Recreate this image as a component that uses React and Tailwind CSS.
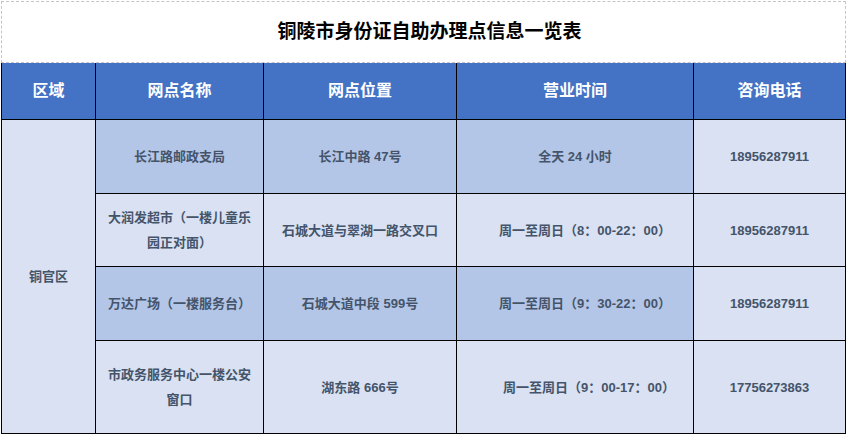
import React from 'react';

const font = { fontFamily: '"Liberation Sans", "Noto Sans CJK SC", sans-serif' };

const headers = ['区域', '网点名称', '网点位置', '营业时间', '咨询电话'];

const rows = [
  {
    name: ['长江路邮政支局'],
    place: '长江中路 47号',
    time: '全天 24 小时',
    phone: '18956287911',
    shade: true,
    shift: '',
  },
  {
    name: ['大润发超市（一楼儿童乐', '园正对面）'],
    place: '石城大道与翠湖一路交叉口',
    time: '周一至周日（8：00-22：00）',
    phone: '18956287911',
    shade: false,
    shift: 'pl-[20px]',
  },
  {
    name: ['万达广场（一楼服务台）'],
    place: '石城大道中段 599号',
    time: '周一至周日（9：30-22：00）',
    phone: '18956287911',
    shade: true,
    shift: 'pl-[20px]',
  },
  {
    name: ['市政务服务中心一楼公安', '窗口'],
    place: '湖东路 666号',
    time: '周一至周日（9：00-17：00）',
    phone: '17756273863',
    shade: false,
    shift: 'pl-[28px]',
  },
];

const Cell = ({ children, className = '' }) => (
  <div
    className={`flex items-center justify-center text-center text-[13px] font-bold leading-[25px] text-[#44546a] ${className}`}
  >
    {children}
  </div>
);

const App = () => {
  return (
    <div className="w-[848px] h-[435px] bg-white pt-px pl-px" style={font}>
      <div className="w-[845px] h-[62px] border border-dashed border-[#c4c4c4] flex items-center justify-center pl-[12px]">
        <h1 className="text-[19px] font-bold text-black">铜陵市身份证自助办理点信息一览表</h1>
      </div>
      <div className="w-[845px] grid grid-cols-[93px_167px_192px_236px_151px] grid-rows-[56px_73px_72px_73px_92px] gap-px bg-black border-x border-b border-black">
        {headers.map((h) => (
          <div key={h} className="bg-[#4472c4] flex items-center justify-center text-white text-[16px] font-bold">
            {h}
          </div>
        ))}
        <Cell className="row-span-4 bg-[#d9e1f2]">铜官区</Cell>
        {rows.map((r, i) => {
          const bg = r.shade ? 'bg-[#b4c6e7]' : 'bg-[#d9e1f2]';
          return (
            <React.Fragment key={i}>
              <Cell className={`${bg} flex-col`}>
                {r.name.map((line) => (
                  <span key={line}>{line}</span>
                ))}
              </Cell>
              <Cell className={bg}>{r.place}</Cell>
              <Cell className={`${bg} ${r.shift}`}>{r.time}</Cell>
              <Cell className="bg-[#d9e1f2]">{r.phone}</Cell>
            </React.Fragment>
          );
        })}
      </div>
    </div>
  );
};

export default App;
